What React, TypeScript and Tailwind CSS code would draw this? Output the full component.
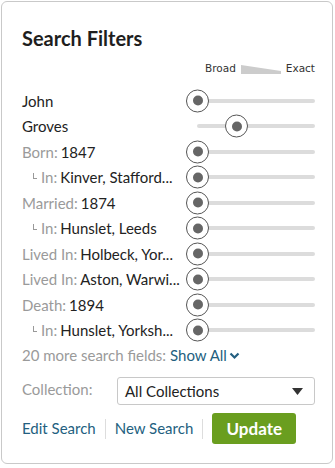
import React from "react";

type Row = { label?: string; value: string; indent?: boolean; plain?: boolean; pos?: number };

const rows: Row[] = [
  { value: "John", plain: true },
  { value: "Groves", plain: true, pos: 39 },
  { label: "Born:", value: "1847" },
  { label: "In:", value: "Kinver, Stafford...", indent: true },
  { label: "Married:", value: "1874" },
  { label: "In:", value: "Hunslet, Leeds", indent: true },
  { label: "Lived In:", value: "Holbeck, Yor..." },
  { label: "Lived In:", value: "Aston, Warwi..." },
  { label: "Death:", value: "1894" },
  { label: "In:", value: "Hunslet, Yorksh...", indent: true },
];

function Slider({ pos = 0 }: { pos?: number }) {
  return (
    <div className="relative w-[129px] h-[25px] shrink-0">
      <div className="absolute left-[11px] right-0 top-1/2 -translate-y-1/2 h-[4px] rounded-full bg-[#dcdcdc]" />
      <div
        className="absolute top-1/2 -translate-y-1/2 w-[23px] h-[23px] rounded-full border-[1.5px] border-[#555] bg-white flex items-center justify-center"
        style={{ left: pos }}
      >
        <div className="w-[10px] h-[10px] rounded-full bg-[#666]" />
      </div>
    </div>
  );
}

export default function App() {
  return (
    <div className="bg-white w-[335px] h-[468px] p-[1px]" style={{ fontFamily: "Lato, 'Open Sans', sans-serif" }}>
      <div className="w-[332px] h-[463px] border border-[#c9c9c9] rounded-[6px] bg-white pl-[20px] pr-[17px] pt-[24px]">
        <h2 className="text-[20px] leading-[24px] font-bold text-[#1e1e1e]">Search Filters</h2>
        <div
          className="mt-[12px] h-[14px] flex items-center justify-end gap-[4px] text-[10.5px] text-[#333]"
          style={{ fontFamily: "'DejaVu Sans', sans-serif" }}
        >
          <span>Broad</span>
          <svg width="40" height="9" viewBox="0 0 40 9" className="mx-[1px]">
            <polygon points="0,0 40,6 40,9 0,9" fill="#cccccc" />
          </svg>
          <span>Exact</span>
        </div>
        <div className="mt-[12px] flex flex-col">
          {rows.map((r, i) => (
            <div key={i} className="flex items-center h-[25.5px]">
              <div className="flex-1 min-w-0 flex items-center whitespace-nowrap text-[15px] leading-[20px]">
                {r.indent && (
                  <span className="ml-[11px] mr-[4px] w-[4px] h-[6px] border-l border-b border-[#999] -mt-[2px]" />
                )}
                {r.label && <span className="text-[#9a9a9a] mr-[3px]">{r.label}</span>}
                <span className="text-[#222]">{r.value}</span>
              </div>
              <Slider pos={r.pos} />
            </div>
          ))}
        </div>
        <div className="mt-[2px] h-[20px] flex items-center text-[15px] leading-[20px] whitespace-nowrap">
          <span className="text-[#9a9a9a]">20 more search fields:</span>
          <span className="ml-[4px] text-[#235f80]">Show All</span>
          <svg width="11" height="8" viewBox="0 0 11 8" className="ml-[2px] mt-[2px]">
            <path d="M1.5 1.5 L5.5 5.5 L9.5 1.5" stroke="#235f80" strokeWidth="2.2" fill="none" />
          </svg>
        </div>
        <div className="mt-[12px] flex items-center">
          <span className="w-[95px] text-[15px] text-[#9a9a9a] -mt-[3px]">Collection:</span>
          <div className="flex-1 h-[28px] border border-[#c8c8c8] rounded-[3px] flex items-center justify-between pl-[7px] pr-[11px]">
            <span className="text-[15px] text-[#222]">All Collections</span>
            <svg width="11" height="7" viewBox="0 0 11 7">
              <polygon points="0,0 11,0 5.5,7" fill="#333" />
            </svg>
          </div>
        </div>
        <div className="mt-[8px] flex items-center text-[15px] text-[#235f80]">
          <span>Edit Search</span>
          <span className="mx-[9px] w-px h-[20px] bg-[#ddd]" />
          <span>New Search</span>
          <span className="mx-[9px] w-px h-[20px] bg-[#ddd]" />
          <button className="w-[84px] h-[31px] rounded-[3px] bg-[#6a9e1f] text-white font-bold text-[17px]">
            Update
          </button>
        </div>
      </div>
    </div>
  );
}
